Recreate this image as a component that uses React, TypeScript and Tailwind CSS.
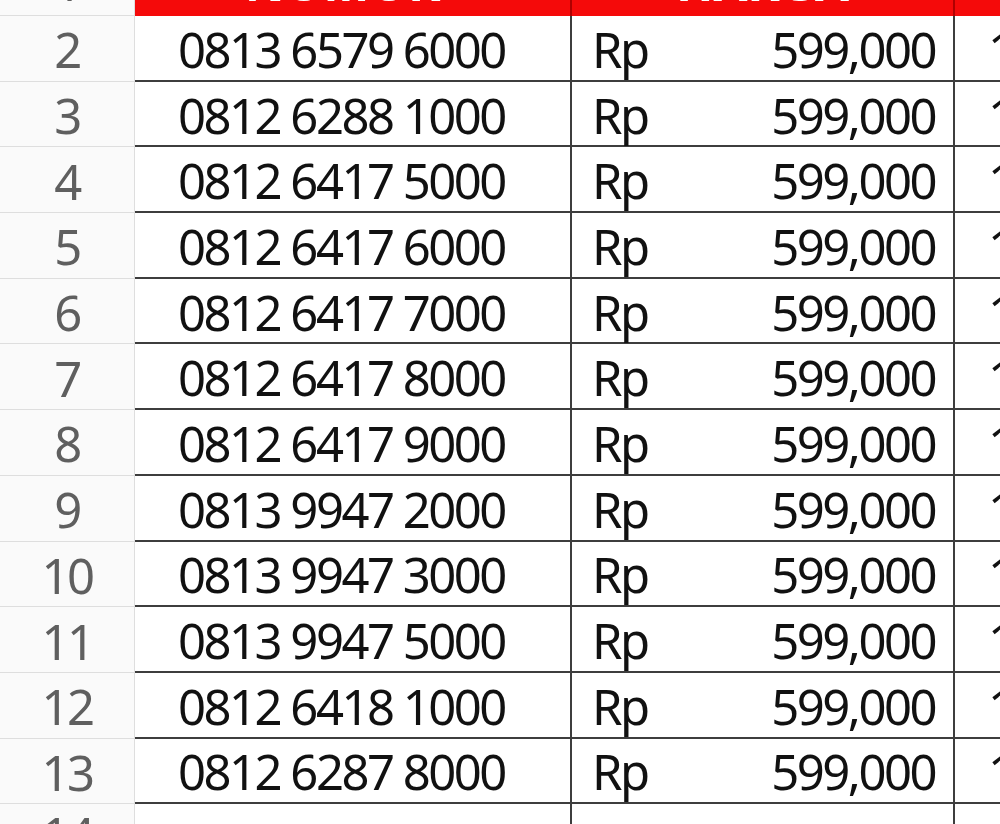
import React from "react";

const rows = [
  { no: 2, nomor: "0813 6579 6000" },
  { no: 3, nomor: "0812 6288 1000" },
  { no: 4, nomor: "0812 6417 5000" },
  { no: 5, nomor: "0812 6417 6000" },
  { no: 6, nomor: "0812 6417 7000" },
  { no: 7, nomor: "0812 6417 8000" },
  { no: 8, nomor: "0812 6417 9000" },
  { no: 9, nomor: "0813 9947 2000" },
  { no: 10, nomor: "0813 9947 3000" },
  { no: 11, nomor: "0813 9947 5000" },
  { no: 12, nomor: "0812 6418 1000" },
  { no: 13, nomor: "0812 6287 8000" },
];

const font = { fontFamily: '"Noto Sans", "Open Sans", sans-serif' };

export default function App() {
  return (
    <div className="w-[1000px] h-[824px] overflow-hidden bg-white" style={font}>
      <div className="mt-[-50px] grid grid-cols-[135px_435px_383px_1fr] text-[49px] tracking-[-2.5px] leading-none">
        {/* header row */}
        <div className="h-[66px] flex items-center justify-center pb-[1px] bg-[#fafafa] border-r border-b border-[#dedede] text-[#5f5f5f]">
          1
        </div>
        <div className="h-[66px] flex items-center justify-center pb-[2px] pr-[20px] bg-[#f50a0a] text-white font-bold tracking-normal">
          NOMOR
        </div>
        <div className="h-[66px] flex items-center justify-center pb-[2px] bg-[#f50a0a] text-white font-bold tracking-normal border-l-2 border-[#b00000]">
          HARGA
        </div>
        <div className="h-[66px] bg-[#f50a0a] border-l-2 border-[#b00000]" />

        {rows.map((r) => (
          <React.Fragment key={r.no}>
            <div className="h-[65.7px] flex items-center justify-center pt-[3px] bg-[#fafafa] border-r border-b border-[#dedede] text-[#5f5f5f]">
              {r.no}
            </div>
            <div className="h-[65.7px] flex items-center pt-[3px] pl-[43px] border-b-2 border-[#3d3d3d] text-[#111]">
              {r.nomor}
            </div>
            <div className="h-[65.7px] flex items-center justify-between pt-[3px] pl-[20px] pr-[18px] border-b-2 border-l-2 border-[#3d3d3d] text-[#111]">
              <span>Rp</span>
              <span>599,000</span>
            </div>
            <div className="h-[65.7px] flex items-center pt-[3px] pl-[33px] border-b-2 border-l-2 border-[#3d3d3d] text-[#111]">
              1
            </div>
          </React.Fragment>
        ))}

        {/* row 14, cut off */}
        <div className="h-[65.7px] flex items-center justify-center pb-[6px] bg-[#fafafa] border-r border-[#dedede] text-[#5f5f5f]">
          14
        </div>
        <div className="h-[65.7px]" />
        <div className="h-[65.7px] border-l-2 border-[#3d3d3d]" />
        <div className="h-[65.7px] border-l-2 border-[#3d3d3d]" />
      </div>
    </div>
  );
}
